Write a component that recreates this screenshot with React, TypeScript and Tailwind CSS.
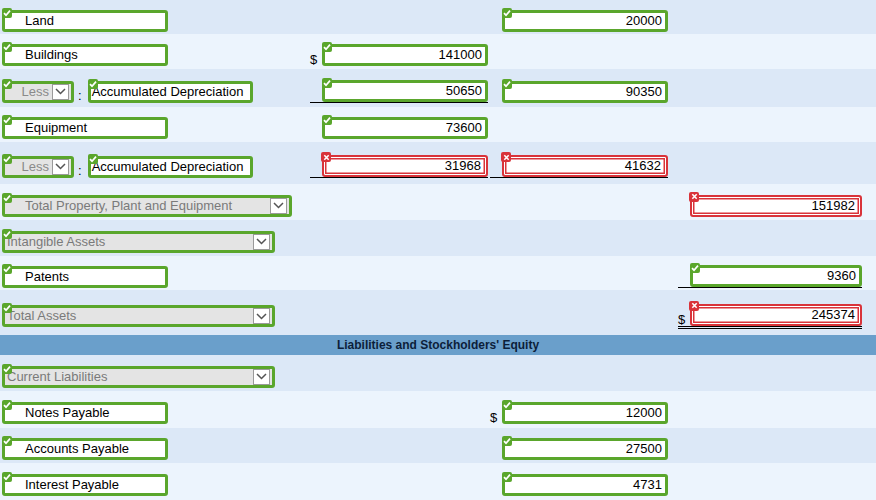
import React from 'react';

const F = { fontFamily: '"Liberation Sans", Tahoma, Arial, sans-serif' };

function Badge({ bad }: { bad?: boolean }) {
  return (
    <span
      className={`absolute -left-[3px] -top-[5px] flex h-[10px] w-[10px] items-center justify-center rounded-[2px] ${
        bad ? 'bg-[#d9333a]' : 'bg-[#5aa62c]'
      }`}
    >
      {bad ? (
        <svg width="7" height="7" viewBox="0 0 8 8">
          <path d="M1.5 1.5l5 5M6.5 1.5l-5 5" stroke="white" strokeWidth="1.8" />
        </svg>
      ) : (
        <svg width="8" height="8" viewBox="0 0 8 8">
          <path d="M1 4.2l2 2 4-4.6" stroke="white" strokeWidth="1.7" fill="none" />
        </svg>
      )}
    </span>
  );
}

function Label({ text, w = 166 }: { text: string; w?: number }) {
  return (
    <div
      className="relative flex h-[22px] items-center whitespace-nowrap rounded-[3px] border-[3px] border-[#5aa62c] bg-white pl-[20px] text-[13px] text-black"
      style={{ width: w }}
    >
      <Badge />
      {text}
    </div>
  );
}

function Arrow() {
  return (
    <span className="flex h-[16px] w-[17px] shrink-0 items-center justify-center border border-[#9a9a9a] bg-white">
      <svg width="11" height="7" viewBox="0 0 11 7">
        <path d="M1 1l4.5 4.5L10 1" stroke="#555" strokeWidth="1.5" fill="none" />
      </svg>
    </span>
  );
}

function Sel({ text, w, indent }: { text: string; w: number; indent?: boolean }) {
  return (
    <div
      className={`relative flex h-[22px] items-center justify-between whitespace-nowrap rounded-[3px] border-[3px] border-[#5aa62c] bg-[#e4e4e4] pr-[2px] text-[13px] text-[#7a7a7a] ${
        indent ? 'pl-[20px]' : 'pl-[2px]'
      }`}
      style={{ width: w }}
    >
      <Badge />
      <span>{text}</span>
      <Arrow />
    </div>
  );
}

function LessRow({ text }: { text: string }) {
  return (
    <div className="flex items-end gap-[4px]">
      <div className="relative flex h-[22px] w-[72px] items-center justify-end rounded-[3px] border-[3px] border-[#5aa62c] bg-[#e4e4e4] pr-[2px] text-[13px] text-[#8a8a8a]">
        <Badge />
        <span className="mr-[3px]">Less</span>
        <Arrow />
      </div>
      <span className="text-[13px] leading-[14px]">:</span>
      <div className="relative ml-[2px] flex h-[22px] w-[165px] items-center whitespace-nowrap rounded-[3px] border-[3px] border-[#5aa62c] bg-white pl-[1px] text-[13px]">
        <Badge />
        {text}
      </div>
    </div>
  );
}

type Val = { v: string; bad?: boolean; pre?: '$' | '_' | ''; dbl?: boolean };

function Cell({ val, w = 166, cw = 180 }: { val?: Val; w?: number; cw?: number }) {
  return (
    <div className="flex items-center" style={{ width: cw }}>
      {val && (
        <div
          className={`flex items-end ${val.pre === '_' ? 'border-b border-black' : ''} ${
            val.dbl ? 'border-b-[3px] border-double border-black' : ''
          }`}
        >
          <span className="w-[12px] text-[13px] leading-[13px] text-black">{val.pre === '$' ? '$' : ''}</span>
          <div
            className={`relative flex h-[22px] items-center justify-end rounded-[3px] bg-white text-[13px] ${
              val.bad
                ? 'border-2 border-[#d9333a] pr-[5px] shadow-[inset_0_0_0_1px_white,inset_0_0_0_2.5px_#d9333a]'
                : 'border-[3px] border-[#5aa62c] pr-[3px]'
            }`}
            style={{ width: w }}
          >
            <Badge bad={val.bad} />
            {val.v}
          </div>
        </div>
      )}
    </div>
  );
}

function Row({
  h,
  dark,
  left,
  c1,
  c2,
  c3,
}: {
  h: number;
  dark?: boolean;
  left: React.ReactNode;
  c1?: Val;
  c2?: Val;
  c3?: Val;
}) {
  return (
    <div className={`flex items-center pt-[7px] ${dark ? 'bg-[#dce8f7]' : 'bg-[#ecf4fd]'}`} style={{ height: h }}>
      <div className="flex w-[310px] items-center pl-[2px]">{left}</div>
      <Cell val={c1} />
      <Cell val={c2} />
      <div className="w-[8px]" />
      <Cell val={c3} w={172} cw={186} />
    </div>
  );
}

export default function App() {
  return (
    <div className="h-[500px] w-[876px] overflow-hidden bg-[#ecf4fd] text-black" style={F}>
      <Row h={34} dark left={<Label text="Land" />} c2={{ v: '20000' }} />
      <Row h={35} left={<Label text="Buildings" />} c1={{ v: '141000', pre: '$' }} />
      <Row h={38} dark left={<LessRow text="Accumulated Depreciation" />} c1={{ v: '50650', pre: '_' }} c2={{ v: '90350' }} />
      <Row h={35} left={<Label text="Equipment" />} c1={{ v: '73600' }} />
      <Row
        h={42}
        dark
        left={<LessRow text="Accumulated Depreciation" />}
        c1={{ v: '31968', bad: true, pre: '_' }}
        c2={{ v: '41632', bad: true, pre: '_' }}
      />
      <Row h={36} left={<Sel text="Total Property, Plant and Equipment" w={290} indent />} c3={{ v: '151982', bad: true }} />
      <Row h={36} dark left={<Sel text="Intangible Assets" w={273} />} />
      <Row h={34} left={<Label text="Patents" />} c3={{ v: '9360', pre: '_' }} />
      <Row h={45} dark left={<Sel text="Total Assets" w={273} />} c3={{ v: '245374', bad: true, pre: '$', dbl: true }} />
      <div className="flex h-[20px] items-center justify-center bg-[#6a9fcb] text-[12px] font-bold text-[#0c1e3a]">
        Liabilities and Stockholders' Equity
      </div>
      <Row h={36} dark left={<Sel text="Current Liabilities" w={273} />} />
      <Row h={37} left={<Label text="Notes Payable" />} c2={{ v: '12000', pre: '$' }} />
      <Row h={35} dark left={<Label text="Accounts Payable" />} c2={{ v: '27500' }} />
      <Row h={37} left={<Label text="Interest Payable" />} c2={{ v: '4731' }} />
    </div>
  );
}
